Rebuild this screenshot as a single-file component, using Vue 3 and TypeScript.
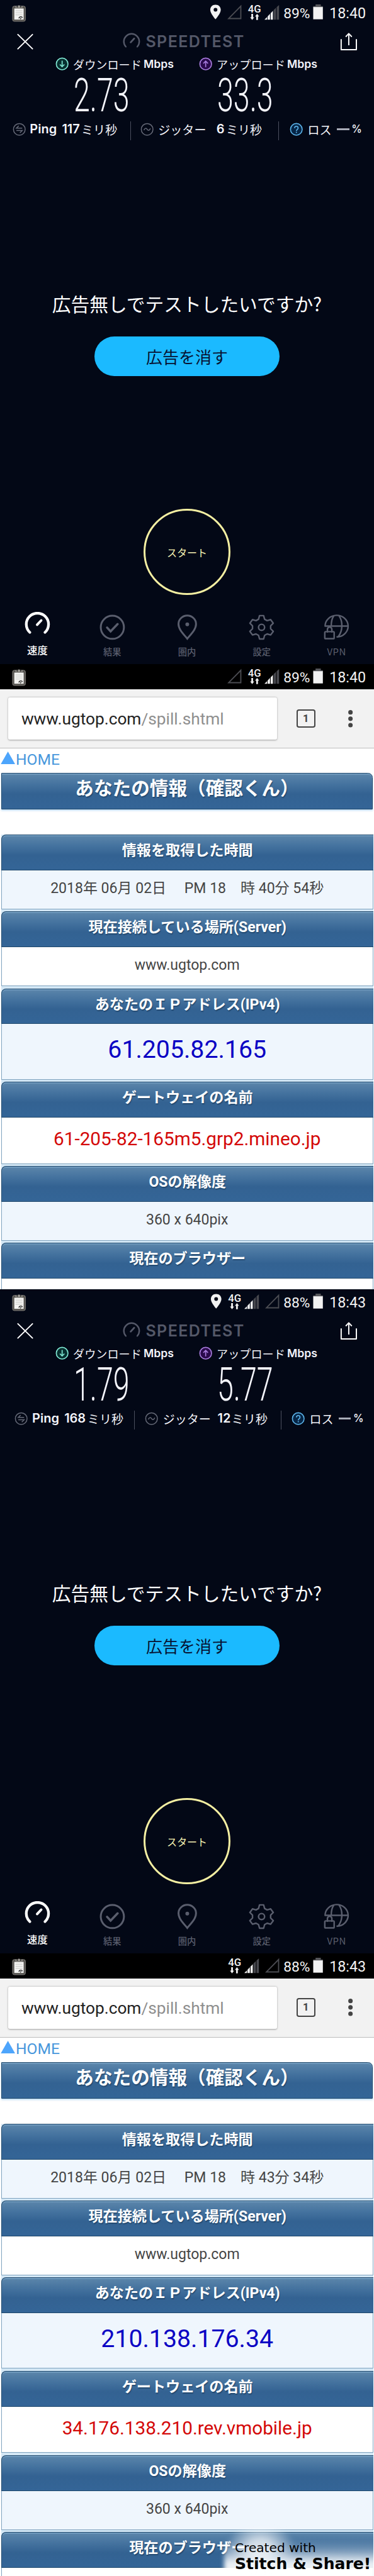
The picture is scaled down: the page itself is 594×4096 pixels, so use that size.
<script setup lang="ts">
interface Speed {
  kind: 'speed'
  key: string
  variant: 'a' | 'b'
  battery: string
  clock: string
  down: string
  up: string
  ping: string
  jitter: string
}
interface Row {
  title: string
  value: string
  cls: string
}
interface Web {
  kind: 'web'
  key: string
  variant: 'a' | 'b'
  battery: string
  clock: string
  rows: Row[]
}

const makeRows = (time: string, ip: string, host: string): Row[] => [
  { title: '情報を取得した時間', value: time, cls: 'r-time tint' },
  { title: '現在接続している場所(Server)', value: 'www.ugtop.com', cls: 'r-server' },
  { title: 'あなたのＩＰアドレス(IPv4)', value: ip, cls: 'r-ip tint' },
  { title: 'ゲートウェイの名前', value: host, cls: 'r-host' },
  { title: 'OSの解像度', value: '360 x 640pix', cls: 'r-os tint' },
  { title: '現在のブラウザー', value: '', cls: 'r-browser' },
]

const screens: (Speed | Web)[] = [
  { kind: 'speed', key: 's1', variant: 'a', battery: '89%', clock: '18:40', down: '2.73', up: '33.3', ping: '117', jitter: '6' },
  {
    kind: 'web', key: 'w1', variant: 'a', battery: '89%', clock: '18:40',
    rows: makeRows('2018年 06月 02日　 PM 18　時 40分 54秒', '61.205.82.165', '61-205-82-165m5.grp2.mineo.jp'),
  },
  { kind: 'speed', key: 's2', variant: 'b', battery: '88%', clock: '18:43', down: '1.79', up: '5.77', ping: '168', jitter: '12' },
  {
    kind: 'web', key: 'w2', variant: 'b', battery: '88%', clock: '18:43',
    rows: makeRows('2018年 06月 02日　 PM 18　時 43分 34秒', '210.138.176.34', '34.176.138.210.rev.vmobile.jp'),
  },
]
</script>

<template>
  <main class="sheet">
    <section v-for="s in screens" :key="s.key" class="screen" :class="[s.kind, s.variant]">
      <header class="status">
        <svg class="clip" width="24" height="30" viewBox="0 0 24 30">
          <rect x="1" y="3" width="22" height="26" rx="3" fill="#55534f" stroke="#85837e" />
          <rect x="4" y="7" width="16" height="19" fill="#f4f4f2" />
          <path d="M6 11h12M6 14.500h12M6 18h12" stroke="#c2c2c0" stroke-width="1" />
          <path d="M6 6V3h4l1-1.500h2L14 3h4v3z" fill="#9a9892" />
          <circle cx="9" cy="4" r="1.200" fill="#222" /><circle cx="15" cy="4" r="1.200" fill="#222" />
          <path d="M12 24c0-3 5-4 6-1M14 25l2-2" fill="none" stroke="#222" stroke-width="1.400" />
        </svg>
        <div class="status-right">
          <svg v-if="s.kind === 'speed'" class="pin" width="20" height="26" viewBox="0 0 20 26">
            <path fill-rule="evenodd" d="M10 0.500C4.700 0.500 1 4.300 1 9.300c0 6 9 16.200 9 16.200s9-10.200 9-16.200c0-5-3.700-8.800-9-8.800zM10 6a3.200 3.200 0 1 1 0 6.400A3.200 3.200 0 0 1 10 6z" fill="#f2f2f2" />
          </svg>
          <svg class="nosim" width="26" height="26" viewBox="0 0 26 26">
            <path d="M3.500 24.200L24.200 3v21.200z" fill="none" stroke="#4b4c52" stroke-width="2" />
          </svg>
          <span class="lte"><b>4G</b>
            <svg width="16" height="11" viewBox="0 0 16 11">
              <path d="M2.300 0h3v6h2L3.800 10.500.3 6h2zM10.700 10.500h3v-6h2L12.200 0 8.700 4.500h2z" fill="#f2f2f2" />
            </svg>
          </span>
          <svg class="bars" width="26" height="26" viewBox="0 0 26 26">
            <path d="M0 25l4.500-4.600V25zM5.500 25v-5.600L9.500 15v10zM10.700 25V14l3.800-4v15z" fill="#f2f2f2" />
            <path d="M15.800 25V8.500l4-4V25zM21 25V3.500L25 0v25z" fill="#47484e" />
          </svg>
          <span class="battery-text">{{ s.battery }}</span>
          <svg class="battery" width="18" height="26" viewBox="0 0 18 26">
            <path d="M4.500 0h9v3H17v2H.5V3h4z" fill="#55565a" />
            <rect x=".5" y="4.500" width="16.500" height="21" fill="#f2f2f2" />
          </svg>
          <span class="clock">{{ s.clock }}</span>
        </div>
      </header>

      <template v-if="s.kind === 'speed'">
        <div class="brand">
          <svg class="close" width="28" height="28" viewBox="0 0 28 28"><path d="M1.500 2l25 24.500M26.500 2l-25 24.500" stroke="#fff" stroke-width="2.100" stroke-linecap="round" /></svg>
          <div class="logo">
            <svg width="30" height="26" viewBox="0 0 30 26" fill="none" stroke="#545868" stroke-linecap="round">
              <path d="M5.200 24A13.200 13.200 0 1 1 24.800 24" stroke-width="2.600" />
              <path d="M13.500 16.500l6-6.500" stroke-width="3" />
            </svg>
            <span>SPEEDTEST</span>
          </div>
          <svg width="30" height="30" viewBox="0 0 30 30" fill="none" stroke="#fff" stroke-width="2.100" stroke-linejoin="round">
            <path d="M2 11v18h26V11M15 21.500V2M9.800 7L15 1.500 20.200 7" />
          </svg>
        </div>
        <div class="results">
          <div class="result">
            <div class="caption">
              <svg width="23" height="23" viewBox="0 0 23 23" fill="none" stroke="#7fe6d2" stroke-width="1.800">
                <circle cx="11.500" cy="11.500" r="10" fill="#06302f" /><path d="M11.500 6v10M7.600 12.400l3.900 3.900 3.900-3.900" />
              </svg>
              <span class="kana">ダウンロード</span><b>Mbps</b>
            </div>
            <div class="number"><span>{{ s.down }}</span></div>
          </div>
          <div class="result">
            <div class="caption">
              <svg width="23" height="23" viewBox="0 0 23 23" fill="none" stroke="#a87cdd" stroke-width="1.800">
                <circle cx="11.500" cy="11.500" r="10" fill="#2a0a4c" /><path d="M11.500 17V7M7.600 10.600l3.900-3.900 3.900 3.900" />
              </svg>
              <span class="kana">アップロード</span><b>Mbps</b>
            </div>
            <div class="number"><span>{{ s.up }}</span></div>
          </div>
        </div>
        <div class="metrics">
          <div class="metric m-ping">
            <svg width="23" height="23" viewBox="0 0 23 23" fill="none" stroke="#666a78" stroke-width="1.600">
              <circle cx="11.500" cy="11.500" r="10" /><path d="M16.500 9.500H6.500l4-4M6.500 13.500h10l-4 4" />
            </svg>
            <b class="name">Ping</b><b class="num">{{ s.ping }}</b><span class="kana">ミリ秒</span>
          </div>
          <div class="metric m-jitter">
            <svg width="23" height="23" viewBox="0 0 23 23" fill="none" stroke="#666a78" stroke-width="1.600">
              <circle cx="11.500" cy="11.500" r="10" /><path d="M6 13c1.500-4 4-4 5.500-1.500s4 2.500 5.500-1.500" />
            </svg>
            <span class="kana name">ジッター</span><b class="num">{{ s.jitter }}</b><span class="kana">ミリ秒</span>
          </div>
          <div class="metric m-loss">
            <svg width="23" height="23" viewBox="0 0 23 23" fill="none" stroke="#5cb4ea" stroke-width="1.700">
              <circle cx="11.500" cy="11.500" r="10" fill="#062546" /><path d="M8.500 9.300c0-4.200 6-4.200 6 0 0 2.400-3 2.300-3 5M11.500 15.700v2" />
            </svg>
            <span class="kana name">ロス</span><i class="dash"></i><b class="pct">%</b>
          </div>
        </div>
        <p class="question">広告無しでテストしたいですか?</p>
        <button class="remove">広告を消す</button>
        <button class="start">スタート</button>
        <nav class="tabs">
          <div class="tab active">
            <svg width="44" height="44" viewBox="0 0 44 44" fill="none" stroke="#fff" stroke-linecap="round">
              <path d="M9 35A19 19 0 1 1 35 35" stroke-width="4.600" /><path d="M21.500 22l7-7.500" stroke-width="4.200" />
            </svg>
            <span>速度</span>
          </div>
          <div class="tab">
            <svg width="44" height="44" viewBox="0 0 44 44" fill="none" stroke="#5a5e6d">
              <circle cx="22" cy="22" r="19.800" stroke-width="3.200" /><path d="M13 22.500l6 6.500L31 16.500" stroke-width="3.800" stroke-linecap="round" />
            </svg>
            <span>結果</span>
          </div>
          <div class="tab">
            <svg width="44" height="44" viewBox="0 0 44 44" fill="none" stroke="#5a5e6d">
              <path d="M22 41.500C15 33 7 25.500 7 16.500a15 14.500 0 0 1 30 0c0 9-8 16.500-15 25z" stroke-width="3.200" /><circle cx="22" cy="17" r="3.200" fill="#5a5e6d" stroke="none" />
            </svg>
            <span>圏内</span>
          </div>
          <div class="tab">
            <svg width="44" height="44" viewBox="0 0 44 44" fill="none" stroke="#5a5e6d" stroke-width="2.600" stroke-linejoin="round">
              <path d="M18.500 2h7l1.700 6.200 4.300 2.400 6-1.700L42 15l-4.500 4.500v5L42 29l-4.500 6.100-6-1.700-4.300 2.400-1.700 6.200h-7l-1.700-6.200-4.300-2.400-6 1.700L2 29l4.500-4.500v-5L2 15l4.500-6.100 6 1.700 4.300-2.400z" />
              <circle cx="22" cy="22" r="5.200" />
            </svg>
            <span>設定</span>
          </div>
          <div class="tab">
            <svg width="44" height="44" viewBox="0 0 44 44" fill="none" stroke="#5a5e6d" stroke-width="2.600" stroke-linecap="round">
              <path d="M2.500 20A19.700 18.500 0 1 1 23 38.500M2.500 20H42M17.500 2.500C14 7 13 13 13 20M26.500 2.500C33 12 33 28 25 38" />
              <path d="M6.500 30v-4.500a3.800 4 0 0 1 7.600 0V30" /><rect x="2" y="29.500" width="16" height="12" rx="1.500" />
            </svg>
            <span class="vpn">VPN</span>
          </div>
        </nav>
      </template>

      <template v-else>
        <div class="toolbar">
          <div class="url"><span>www.ugtop.com</span><span class="path">/spill.shtml</span></div>
          <div class="count">1</div>
          <svg class="dots" width="10" height="32" viewBox="0 0 10 32" fill="#444"><circle cx="5" cy="5" r="3.800" /><circle cx="5" cy="16" r="3.800" /><circle cx="5" cy="27" r="3.800" /></svg>
        </div>
        <div class="home">
          <svg width="25" height="22" viewBox="0 0 25 22"><path d="M12.500 0L25 22H0z" fill="#4da5fc" /></svg>
          <span>HOME</span>
        </div>
        <h1>あなたの情報（確認くん）</h1>
        <div class="table">
          <div v-for="r in s.rows" :key="r.title" class="row" :class="r.cls">
            <h2>{{ r.title }}</h2>
            <p>{{ r.value }}</p>
          </div>
        </div>
      </template>
    </section>
    <aside class="mark">
      <span class="small">Created with</span>
      <strong>Stitch &amp; Share!</strong>
    </aside>
  </main>
</template>

<style>
body { background: #fff; overflow: hidden; }
</style>

<style scoped>
.sheet {
  zoom: 0.9288;
  position: relative;
  width: 639.6px;
  height: 4410px;
  overflow: hidden;
  font-family: Roboto, "Noto Sans CJK JP", sans-serif;
}
.sheet * { box-sizing: border-box; }
svg { display: block; flex: none; }
h1, h2, p { margin: 0; }
.screen { display: flex; flex-direction: column; overflow: hidden; }
.speed { height: 1137px; background: #030816; color: #f4f5fb; }
.web { height: 1070px; background: #fff; }
.web.b { height: 1066px; }

.status {
  height: 43px;
  flex: none;
  display: flex;
  justify-content: space-between;
  padding: 8px 14px 0 20px;
  color: #f4f4f4;
}
.web .status { background: #000; }
.status-right { display: flex; }
.nosim { margin: 0 11px 0 9px; }
.lte { width: 22px; margin-right: 6px; display: flex; flex-direction: column; align-items: center; }
.lte b { font-weight: 500; font-size: 18px; line-height: 14px; margin: 1px 0 1px; }
.bars { margin-top: 1px; }
.b .lte { order: 1; margin-left: 11px; }
.b .bars { order: 2; }
.b .nosim { order: 3; margin: 0 0 0 8px; }
.b .battery-text, .b .battery, .b .clock { order: 4; }
.battery-text { font-size: 24.500px; line-height: 32px; width: 51px; margin-left: 6.500px; white-space: nowrap; }
.clock { font-size: 25px; line-height: 32px; width: 72px; text-align: right; }

.brand {
  height: 55px;
  flex: none;
  display: flex;
  align-items: flex-start;
  justify-content: space-between;
  padding: 13px 28px 0 29px;
}
.close { margin-top: 1px; }
.logo { display: flex; margin-left: -10px; }
.logo span {
  margin-left: 9px;
  font: 600 27px/32px Inter, sans-serif;
  letter-spacing: 1.500px;
  color: #545868;
}
.results { display: flex; height: 110px; flex: none; padding-left: 95px; }
.result { width: 245.500px; }
.caption { display: flex; align-items: center; height: 24px; white-space: nowrap; }
.kana { font-family: "Noto Sans CJK JP", sans-serif; }
.caption .kana { font-size: 19.500px; margin-left: 7px; line-height: 24px; }
.caption b { font: 600 19px/24px Inter, sans-serif; margin-left: 3.500px; }
.number { height: 80px; padding: 1px 0 0 31px; }
.number span {
  display: inline-block;
  font-weight: 300;
  font-size: 79px;
  line-height: 82px;
  transform: scaleX(0.635);
  transform-origin: 0 0;
}
.metrics { display: flex; height: 32px; flex: none; }
.metric { display: flex; align-items: center; white-space: nowrap; font-size: 20px; line-height: 30px; padding-bottom: 5px; }
.metric b { font: 600 21.500px/30px Inter, sans-serif; }
.metric + .metric { border-left: 2px solid #4b4f5e; }
.metric .kana { font-size: 20.500px; }
.m-ping { width: 222.500px; padding-left: 21px; }
.m-ping .name { width: 55px; margin-left: 7px; }
.m-ping .num { width: 33px; }
.m-jitter { width: 253.500px; padding-left: 17px; }
.m-jitter .name { width: 99.500px; margin-left: 7px; }
.m-jitter .num { width: 16.500px; }
.m-loss { padding-left: 18px; }
.m-loss .name { margin-left: 8px; width: 50px; }
.dash { width: 21px; height: 3.500px; background: #a9acb8; margin-right: 4px; }
.metric .pct { font-size: 18px; font-weight: 500; }
.b .m-ping { width: 229.500px; padding-left: 25px; }
.b .m-ping .num { width: 39.500px; }
.b .m-jitter { width: 251px; padding-left: 17px; }
.b .m-jitter .name { width: 93.500px; margin-left: 8px; }
.b .m-jitter .num { width: 24px; }
.b .m-loss { padding-left: 16.500px; }

.question { margin-top: 256px; font-size: 32px; line-height: 48px; text-align: center; color: #fff; flex: none; font-family: "Noto Sans CJK JP", sans-serif; }
button { display: block; border: 0; padding: 0; flex: none; font-family: "Noto Sans CJK JP", sans-serif; }
.remove { width: 316px; height: 68px; margin: 32px auto 0; border-radius: 34px; background: #1bbaff; color: #071232; font-size: 28px; }
.start { width: 148px; height: 148px; margin: 227px auto 0; border-radius: 50%; border: 4px solid #f4efa2; background: transparent; color: #f6f2b4; font-size: 17.300px; }
.tabs { display: flex; margin-top: 33px; height: 85px; flex: none; }
.tab { width: 20%; display: flex; flex-direction: column; align-items: center; color: #5a5e6d; font: 500 15.300px/24px "Noto Sans CJK JP", sans-serif; }
.tab span { margin-top: 7.500px; }
.tab .vpn { font-weight: 400; font-size: 16px; letter-spacing: 0.500px; }
.tab.active { color: #fff; font-size: 17.600px; }
.tab.active svg { margin-top: -4px; }
.tab.active span { margin-top: 8.500px; }

.toolbar { height: 101px; flex: none; background: #f2f2f2; border-bottom: 1.500px solid #bdbdbd; display: flex; padding: 14px 0 0 14.500px; }
.url { width: 459px; height: 72px; background: #fff; border-radius: 3px; box-shadow: 0 1px 3px rgba(0,0,0,.35); padding-left: 22px; font-size: 28.300px; line-height: 74px; color: #222; white-space: nowrap; }
.path { color: #8f8f8f; }
.count { width: 32px; height: 32px; margin: 20px 0 0 33.500px; border: 3px solid #444; border-radius: 4px; color: #444; font-weight: 700; font-size: 18px; line-height: 27px; text-align: center; }
.dots { margin: 20px 0 0 55px; }
.home { display: flex; height: 41px; flex: none; padding: 5.500px 0 0 1px; color: #4797dc; font-size: 26.500px; line-height: 27px; }
.home span { margin-left: 1px; }
h1, h2 {
  color: #fff;
  text-align: center;
  font-weight: 700;
  background: linear-gradient(#5c86ab 0, #45739f 30%, #336292 58%, #346597 100%);
  border: 1.500px solid #1e476b;
  box-shadow: inset 0 1.500px 1px rgba(160,200,230,.45);
  text-shadow: 1px 2px 1px rgba(20,50,80,.5);
  white-space: nowrap;
}
h1 { height: 63px; flex: none; margin: 1px 2px 43px; border-radius: 0 8px 0 0; font-size: 31.900px; line-height: 52px; box-shadow: inset 0 1.500px 1px rgba(160,200,230,.45), 0 2px 3px rgba(130,190,235,.5); }
.table { margin: 0 2px; flex: none; width: 636px; }
.row { display: flex; flex-direction: column; padding-bottom: 4px; background: #d3e7f5; }
h2 { height: 61px; flex: none; border-right: 0; border-radius: 8px 0 0 0; font-size: 24.900px; line-height: 54px; }
.row p { flex: 1; background: #fff; border: 1.500px solid #7fa3bf; border-top: 0; text-align: center; font-size: 24.800px; line-height: 63px; color: #454545; white-space: pre; }
.row.tint p { background: #eff6fd; }
.r-time, .r-server { height: 131.600px; }
.r-ip { height: 160px; }
.row.r-ip p { font-size: 42.300px; line-height: 90px; color: #0b03c4; }
.r-host { height: 144.300px; }
.row.r-host p { font-size: 32px; line-height: 74px; color: #d40808; }
.r-os { height: 131.500px; }
.r-browser { height: 131px; }

.mark { position: absolute; right: 0; bottom: 0; width: 256px; height: 82px; padding: 20.500px 0 0 17px; color: #000; font-family: "DejaVu Sans", sans-serif; white-space: nowrap; }
.mark::before { content: ""; position: absolute; inset: 0 -20px -20px 0; background: radial-gradient(ellipse 60px 44px at 62px 34px, rgba(255,255,255,.75) 30%, transparent), linear-gradient(transparent 20px, rgba(235,243,250,.25) 34px, rgba(255,255,255,.9) 60px); filter: blur(4px); }
.small, .mark strong { display: block; position: relative; }
.mark .small { font-size: 21.700px; line-height: 26px; padding-left: 1px; }
.mark strong { font-size: 27px; line-height: 30px; padding-left: 1px; }
</style>
